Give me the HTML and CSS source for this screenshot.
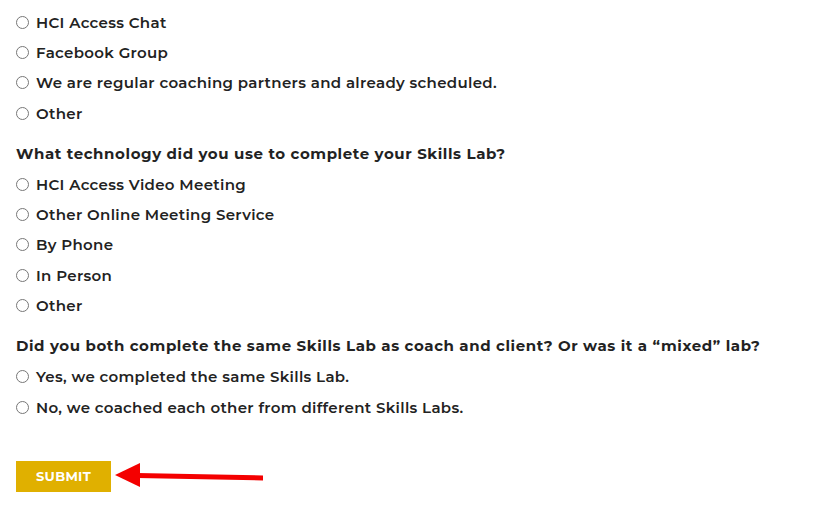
FILE: index.html
```html
<!DOCTYPE html>
<html>
<head>
<meta charset="utf-8">
<link rel="stylesheet" href="styles.css">
</head>
<body>
<form class="form">
  <div class="group">
    <label class="opt"><span class="radio"></span>HCI Access Chat</label>
    <label class="opt"><span class="radio"></span>Facebook Group</label>
    <label class="opt"><span class="radio"></span>We are regular coaching partners and already scheduled.</label>
    <label class="opt"><span class="radio"></span>Other</label>
  </div>
  <div class="group">
    <div class="question">What technology did you use to complete your Skills Lab?</div>
    <label class="opt"><span class="radio"></span>HCI Access Video Meeting</label>
    <label class="opt"><span class="radio"></span>Other Online Meeting Service</label>
    <label class="opt"><span class="radio"></span>By Phone</label>
    <label class="opt"><span class="radio"></span>In Person</label>
    <label class="opt"><span class="radio"></span>Other</label>
  </div>
  <div class="group">
    <div class="question">Did you both complete the same Skills Lab as coach and client? Or was it a “mixed” lab?</div>
    <label class="opt"><span class="radio"></span>Yes, we completed the same Skills Lab.</label>
    <label class="opt"><span class="radio"></span>No, we coached each other from different Skills Labs.</label>
  </div>
  <div class="actions">
    <button type="button" class="submit">SUBMIT</button>
    <svg class="arrow" width="150" height="30" viewBox="0 0 150 30">
      <polygon points="0,13 25,1 25,25" fill="#f40000"/>
      <polygon points="22,11 148,13.5 148,18.5 22,16" fill="#f40000"/>
    </svg>
  </div>
</form>
</body>
</html>
```
FILE: styles.css
```css
html, body {
  margin: 0;
  background: #fff;
}
body {
  font-family: "Montserrat", "Open Sans", "Liberation Sans", sans-serif;
  color: #222;
  font-size: 15px;
}
.form {
  padding: 7px 16px 0 16px;
}
.group {
  display: flex;
  flex-direction: column;
  margin-bottom: 11px;
}
.opt {
  display: flex;
  align-items: center;
  height: 30.3px;
  font-weight: 600;
  letter-spacing: 0.33px;
}
.radio {
  width: 11px;
  height: 11px;
  border: 1px solid #777;
  border-radius: 50%;
  margin-right: 7px;
  flex: none;
}
.question {
  height: 30px;
  margin-top: -1px;
  margin-bottom: 1px;
  display: flex;
  align-items: center;
  font-weight: 700;
  letter-spacing: 0.6px;
}
.actions {
  display: flex;
  align-items: center;
  margin-top: 38px;
}
.submit {
  width: 95px;
  height: 31px;
  background: #e0b000;
  color: #fff;
  border: none;
  font-family: inherit;
  font-weight: 700;
  font-size: 13px;
  letter-spacing: 0.3px;
  padding: 0;
}
.arrow {
  margin-left: 4px;
  margin-top: 2px;
}
```
